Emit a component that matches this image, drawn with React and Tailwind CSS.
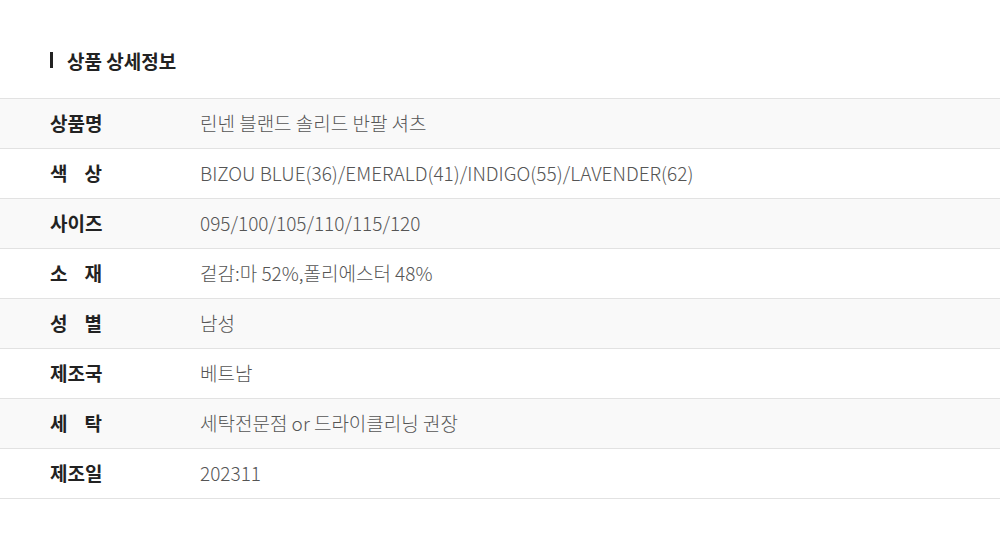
export default function App() {
  const rows = [
    [["상품명"], "린넨 블랜드 솔리드 반팔 셔츠"],
    [["색", "상"], "BIZOU BLUE(36)/EMERALD(41)/INDIGO(55)/LAVENDER(62)"],
    [["사이즈"], "095/100/105/110/115/120"],
    [["소", "재"], "겉감:마 52%,폴리에스터 48%"],
    [["성", "별"], "남성"],
    [["제조국"], "베트남"],
    [["세", "탁"], "세탁전문점 or 드라이클리닝 권장"],
    [["제조일"], "202311"],
  ];
  return (
    <div
      className="w-[1000px] h-[548px] bg-white"
      style={{ fontFamily: '"Noto Sans CJK KR", "Noto Sans", sans-serif' }}
    >
      <div className="pt-[49px] pl-[50px] flex items-center h-[98px] pb-[27px] box-border">
        <div className="w-[3px] h-[16px] bg-[#222]" />
        <div className="ml-[14px] text-[19px] font-bold text-[#222] leading-none">상품 상세정보</div>
      </div>
      <div className="border-t border-[#e2e2e2]">
        {rows.map(([label, value], i) => (
          <div
            key={i}
            className={`flex items-center h-[50px] border-b border-[#e2e2e2] ${i % 2 === 0 ? "bg-[#f9f9f9]" : "bg-white"}`}
          >
            <div className="w-[200px] pl-[50px] shrink-0">
              <div className="w-[52px] flex justify-between whitespace-nowrap text-[19px] font-bold text-[#222]">
                {label.map((l, j) => (
                  <span key={j}>{l}</span>
                ))}
              </div>
            </div>
            <div className="text-[19px] font-light text-[#555] whitespace-nowrap">{value}</div>
          </div>
        ))}
      </div>
    </div>
  );
}
